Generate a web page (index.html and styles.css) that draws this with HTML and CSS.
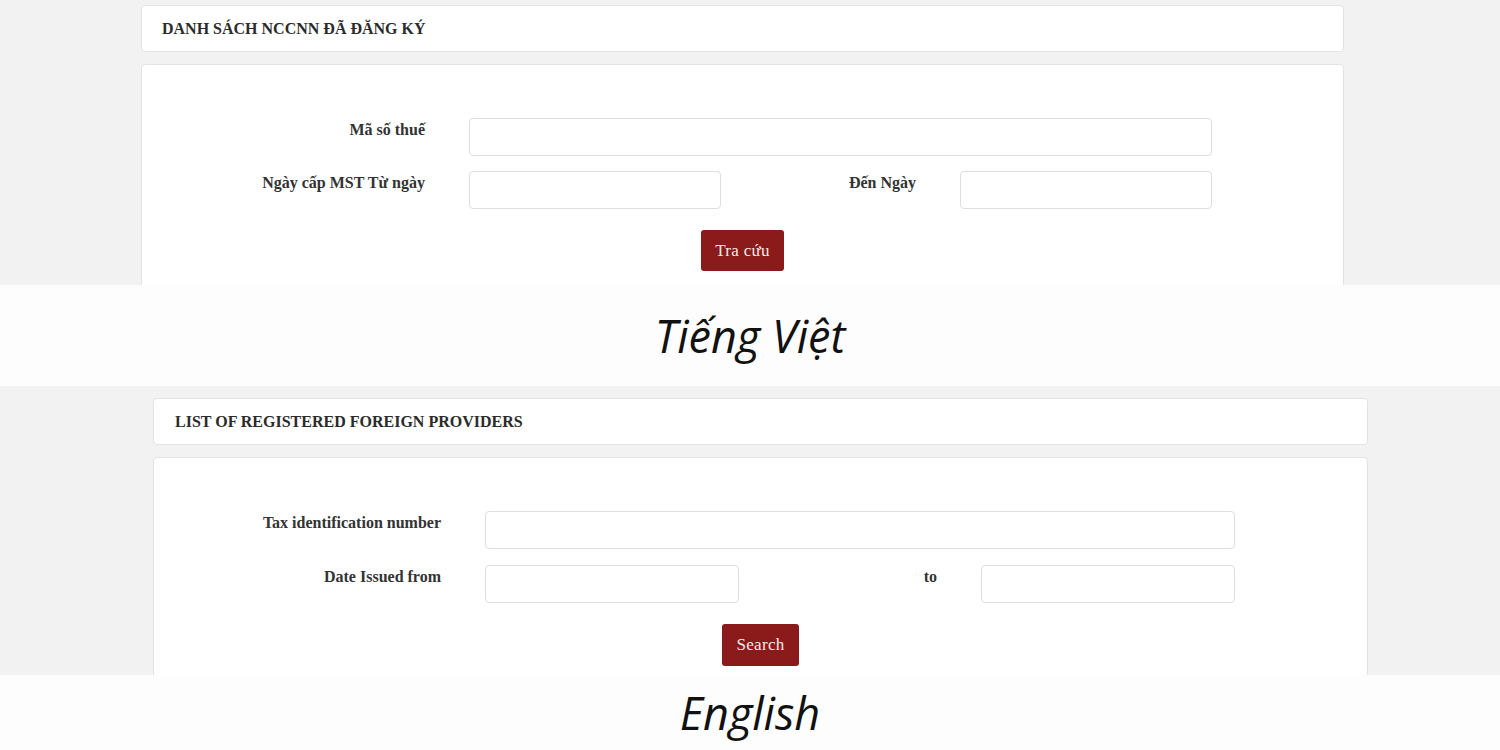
FILE: index.html
```html
<!DOCTYPE html>
<html lang="vi">
<head>
  <meta charset="UTF-8" />
  <meta name="viewport" content="width=device-width, initial-scale=1.0"/>
  <title>Danh sách NCCNN đã đăng ký</title>
  <link rel="stylesheet" href="styles.css">
</head>
<body>

  <!-- Vietnamese screen -->
  <div class="shot shot-vi">
    <div class="panel panel-head">
      <h3>DANH SÁCH NCCNN ĐÃ ĐĂNG KÝ</h3>
    </div>
    <div class="panel panel-form">
      <form class="search-form">
        <label>Mã số thuế</label>
        <input type="text" class="wide">
        <label>Ngày cấp MST Từ ngày</label>
        <input type="text">
        <label>Đến Ngày</label>
        <input type="text">
      </form>
      <div class="actions">
        <button type="button">Tra cứu</button>
      </div>
    </div>
  </div>

  <div class="caption caption-vi">Tiếng Việt</div>

  <!-- English screen -->
  <div class="shot shot-en">
    <div class="panel panel-head">
      <h3>LIST OF REGISTERED FOREIGN PROVIDERS</h3>
    </div>
    <div class="panel panel-form">
      <form class="search-form">
        <label>Tax identification number</label>
        <input type="text" class="wide">
        <label>Date Issued from</label>
        <input type="text">
        <label>to</label>
        <input type="text">
      </form>
      <div class="actions">
        <button type="button">Search</button>
      </div>
    </div>
  </div>

  <div class="caption caption-en">English</div>

</body>
</html>
```

FILE: styles.css
```css
* {
  box-sizing: border-box;
}

body {
  margin: 0;
  background: #fdfdfd;
  font-family: "Liberation Serif", "Times New Roman", serif;
  color: #333;
}

/* Screenshot blocks */
.shot {
  background: #f3f2f2;
  overflow: hidden;
}

.shot-vi {
  height: 285px;
  padding: 5px 0 0 141px;
}

.shot-en {
  height: 289px;
  padding: 12px 0 0 153px;
}

.shot-vi .panel {
  width: 1203px;
}

.shot-en .panel {
  width: 1215px;
}

.panel {
  background: #fff;
  border: 1px solid #e3e3e3;
  border-radius: 4px;
}

.panel-head {
  height: 47px;
  display: flex;
  align-items: center;
  padding-left: 20px;
  margin-bottom: 12px;
}

.shot-en .panel-head {
  padding-left: 21px;
}

.panel-head h3 {
  margin: 0;
  font-size: 16px;
  font-weight: bold;
  color: #2b2b2b;
}

.panel-form {
  height: 400px;
  padding-top: 53px;
}

/* Form grid */
.search-form {
  display: grid;
  column-gap: 44px;
  align-items: start;
}

.shot-vi .search-form {
  grid-template-columns: 283px 252px 1fr 252px;
  width: 1070px;
  row-gap: 15px;
}

.shot-en .search-form {
  grid-template-columns: 287px 254px 1fr 254px;
  width: 1081px;
  row-gap: 16px;
}

.search-form label {
  text-align: right;
  font-size: 16px;
  font-weight: bold;
  line-height: 20px;
  padding-top: 2px;
  color: #333;
}

.search-form input {
  height: 38px;
  border: 1px solid #dedede;
  border-radius: 4px;
  background: #fff;
}

.search-form input.wide {
  grid-column: 2 / 5;
}

.actions {
  display: flex;
  justify-content: center;
  margin-top: 21px;
}

button {
  background-color: #8b1a1a;
  color: #f4eaea;
  border: none;
  border-radius: 3px;
  font-family: "Liberation Serif", "Times New Roman", serif;
  font-size: 17px;
  letter-spacing: 0.3px;
  height: 41px;
  padding: 0 14px;
  cursor: pointer;
}

.shot-en button {
  height: 42px;
}

/* Captions */
.caption {
  display: flex;
  align-items: center;
  justify-content: center;
  font-family: "Open Sans", "Noto Sans", sans-serif;
  font-style: italic;
  font-size: 45px;
  color: #111;
  background: #fdfdfd;
}

.caption-vi {
  height: 101px;
}

.caption-en {
  height: 75px;
}
```
